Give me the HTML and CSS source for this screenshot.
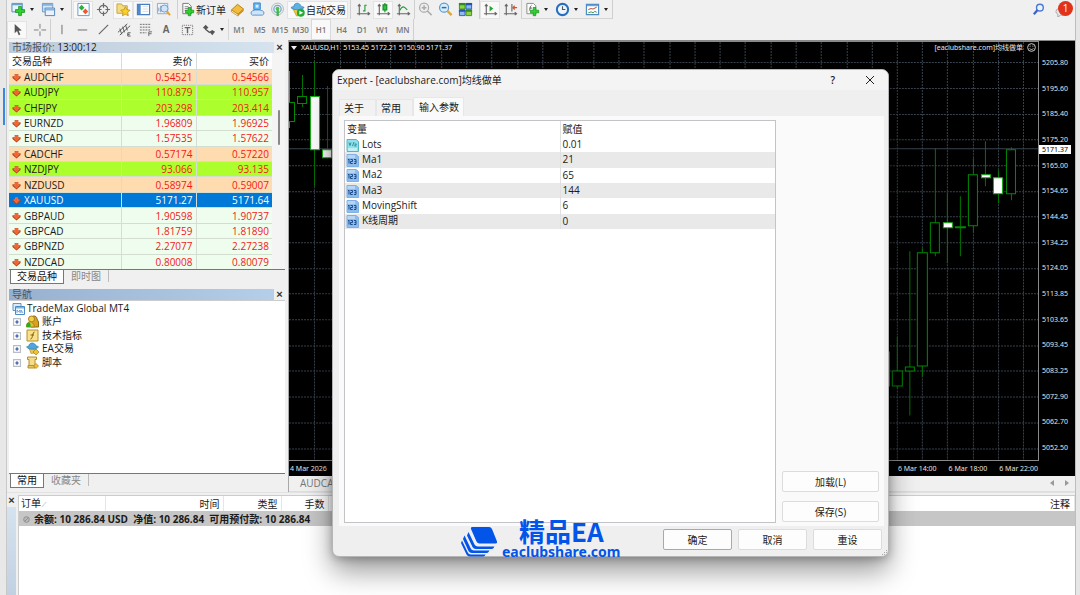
FILE: index.html
```html
<!DOCTYPE html>
<html lang="zh-CN">
<head>
<meta charset="utf-8">
<title>TradeMax Global MT4</title>
<link rel="stylesheet" href="styles.css">
</head>
<body>
<svg class="defs" aria-hidden="true">
  <symbol id="tick" viewBox="0 0 10 10"><path d="M3 1h4v2.500h2.500v2L5 9.500.5 5.500v-2H3z" fill="#b8401c"/><path d="M3.800 1.800h2.400v2.500h2L5 8 1.800 4.300h2z" fill="#f4622c" stroke="#f9a27a" stroke-width=".4"/></symbol>
  <symbol id="plus" viewBox="0 0 16 16"><path d="M5.500 1h4v4.500h4.500v4h-4.500v4.500h-4v-4.500H1v-4h4.500z" fill="#2fd32f" stroke="#0a8a12"/></symbol>
  <symbol id="num" viewBox="0 0 13 13"><path d="M1 .5h9l2.500 2v10h-11.500z" fill="#8ebcec" stroke="#7fb0e4"/><path d="M1.500 1h7.500v3H1.500z" fill="#b7d6f6"/><path d="M2 6l1-1v4.500M4.500 5.500h2v2h-2v2h2.200M8 5.500h2v4h-2M8.500 7.500h1.500" fill="none" stroke="#1d4c8c"/></symbol>
  <symbol id="box" viewBox="0 0 7 7"><path d="M.5.5h6v6h-6z" fill="#fff" stroke="#b8bec6"/><path d="M2 3.500h3M3.500 2v3" stroke="#2b4a9c"/></symbol>
</svg>
<div class="desktop">
<div class="edge edge-left"><span class="mark"></span></div>
<main class="app">
  <header class="toolbars">
    <div class="toolbar">
      <div class="group first">
        <button class="tool drop" aria-label="新图表"><svg viewBox="0 0 16 16"><path d="M1 1.500h11v9H1z" fill="#e8f2fb" stroke="#4c86b8"/><path d="M1 1.500h11v2H1z" fill="#6ea3d0"/><use href="#plus" x="4" y="4" width="12" height="12"/></svg></button>
        <button class="tool drop" aria-label="配置文件"><svg viewBox="0 0 16 16"><path d="M1.500 1.500h11v9h-11z" fill="#d6e6f6" stroke="#6b96c4"/><path d="M4.500 6.500h10v8h-10z" fill="#eaf3fc" stroke="#4f83ba"/><path d="M2 2h10v2H2zM5 7h9v2H5zM3 6h1v3H3z" fill="#87b2de"/></svg></button>
      </div>
      <div class="group">
        <button class="tool on" aria-label="市场报价"><svg viewBox="0 0 16 16"><path d="M2 1.500h12v13H2z" fill="#fff" stroke="#5a9bd6"/><path d="M6 3l3 3-3 3-3-3z" fill="#2fae3e"/><path d="M10 7l3 3-3 3-3-3z" fill="#ea5a32"/></svg></button>
        <button class="tool" aria-label="数据窗口"><svg viewBox="0 0 16 16" fill="none" stroke="#6a6a6a" stroke-width="1.300"><circle cx="8" cy="8" r="4.500"/><path d="M8 1v5M8 10v5M1 8h5M10 8h5"/></svg></button>
        <button class="tool on" aria-label="导航"><svg viewBox="0 0 16 16"><path d="M1 2h5l1 2h5v8H1z" fill="#f4dc83" stroke="#c4a23c"/><path d="M10 5l1.600 3.200 3.400.5-2.500 2.500.6 3.500-3.100-1.700-3.100 1.700.6-3.500L5 8.700l3.400-.5z" fill="#f9d02c" stroke="#b98a10" stroke-width=".8"/></svg></button>
        <button class="tool on" aria-label="终端"><svg viewBox="0 0 16 16"><path d="M1.500 2.500h13v11h-13z" fill="#fff" stroke="#4a7fbe" stroke-width="1.200"/><path d="M2 3h3v10H2z" fill="#4f88cc"/><path d="M7 5h6M7 7.500h6M7 10h6" stroke="#d5dde8"/></svg></button>
        <button class="tool" aria-label="策略测试"><svg viewBox="0 0 16 16"><path d="M1.500 1.500h11v11h-11z" fill="#eef3f8" stroke="#92a9c2"/><path d="M3 10V6M5 11V4" stroke="#7f99b8"/><circle cx="9" cy="7" r="3.800" fill="#cfe6fa" stroke="#6a9ac8"/><path d="M11.500 10l3.500 4" stroke="#e0a33a" stroke-width="2.200"/></svg></button>
      </div>
      <div class="group">
        <button class="tool wide order"><svg viewBox="0 0 16 16"><path d="M3 1.500h6l3 3v8H3z" fill="#fafafa" stroke="#777"/><path d="M5 5h4M5 7h5M5 9h3" stroke="#888"/><use href="#plus" x="5" y="5" width="11" height="11"/></svg>新订单</button>
        <button class="tool" aria-label="MetaEditor"><svg viewBox="0 0 16 16"><path d="M1.500 8.500L8 2.500l6.500 5L8.500 13z" fill="#f2bd3c" stroke="#b57d12"/><path d="M1.500 8.500v2l7 4.500v-2z" fill="#fff0c0" stroke="#b57d12" stroke-width=".7"/><path d="M14.500 7.500v2l-6 5.500v-2z" fill="#c88a1c"/></svg></button>
        <button class="tool" aria-label="社区"><svg viewBox="0 0 16 16"><path d="M4 1h7v7H4z" fill="#67b5f3" stroke="#3a86cc"/><path d="M6 3h3v3H6z" fill="#d8efff"/><path d="M2.500 14a2.500 2.500 0 0 1 0-4.500l3-1h5l3 1a2.500 2.500 0 0 1 0 4.500z" fill="#cfe4f8" stroke="#5b94cc"/></svg></button>
        <button class="tool" aria-label="信号"><svg viewBox="0 0 16 16" fill="none"><circle cx="8" cy="7.500" r="6.300" stroke="#a9b8c4"/><circle cx="8" cy="7.500" r="3.900" stroke="#6fa9c9" stroke-width="1.300"/><path d="M7 7h2.500v8H7z" fill="#44b944"/><circle cx="8" cy="7" r="2" fill="#51c251"/></svg></button>
        <button class="tool wide on auto"><svg viewBox="0 0 16 16"><path d="M3 7l9 .5-1 6-4 1.500z" fill="#f6c944" stroke="#b58c18" stroke-width=".7"/><path d="M1 6c1-1 2-1 3-1 0-5 7-5 8 0 1 0 3 0 3 1-3 3-11 3-14 0z" fill="#5db1e4" stroke="#3079ae" stroke-width=".7"/><circle cx="11.500" cy="11.500" r="4.200" fill="#20b030"/><path d="M10 9.300l4 2.200-4 2.200z" fill="#fff"/></svg>自动交易</button>
      </div>
      <div class="group charts">
        <button class="tool" aria-label="柱状图"><svg viewBox="0 0 16 16" fill="none" stroke="#666" stroke-width="1.200"><path d="M3.500 3v11M1 12.500h13M2 4.500l1.500-2L5 4.500M12.500 11l2 1.500-2 1.500"/><path d="M9.500 3v7M9.500 3.500h2M7.500 9.500h2" stroke="#2a9a3a"/></svg></button>
        <button class="tool on" aria-label="蜡烛图"><svg viewBox="0 0 16 16" fill="none" stroke="#666" stroke-width="1.200"><path d="M3.500 3v11M1 12.500h13M2 4.500l1.500-2L5 4.500M12.500 11l2 1.500-2 1.500"/><path d="M9.500 1v10" stroke="#148b24"/><path d="M7.500 3h4v5.500h-4z" fill="#2cc53c" stroke="#148b24"/></svg></button>
        <button class="tool" aria-label="折线图"><svg viewBox="0 0 16 16" fill="none" stroke="#666" stroke-width="1.200"><path d="M3.500 3v11M1 12.500h13M2 4.500l1.500-2L5 4.500M12.500 11l2 1.500-2 1.500"/><path d="M4 9c3-6 5-4 8-.5" stroke="#2a9a3a"/></svg></button>
      </div>
      <div class="group">
        <button class="tool" aria-label="放大"><svg viewBox="0 0 16 16"><circle cx="6.500" cy="6" r="4.800" fill="#eee" stroke="#aaa" stroke-width="1.300"/><path d="M4 6h5M6.500 3.500v5M10 9.500l4.500 4.500" stroke="#aaa" stroke-width="1.600"/></svg></button>
        <button class="tool" aria-label="缩小"><svg viewBox="0 0 16 16"><circle cx="6.500" cy="6" r="4.800" fill="#d8edfc" stroke="#5b9bd0" stroke-width="1.300"/><path d="M4 6h5" stroke="#2c6ea8" stroke-width="1.600"/><path d="M10 9.500l4.500 4.500" stroke="#dba63a" stroke-width="2.400"/></svg></button>
        <button class="tool" aria-label="平铺窗口"><svg viewBox="0 0 16 16"><path d="M1.500 1.500h6v6h-6zM8.500 8.500h6v6h-6z" fill="#8fd04a" stroke="#3c8f20"/><path d="M8.500 1.500h6v6h-6zM1.500 8.500h6v6h-6z" fill="#8db8f0" stroke="#2c5fb4"/><path d="M1 1h7v2.500H1zM8 8h7v2.500H8z" fill="#2e8a1c"/><path d="M8.500 1H15v2.500H8.500zM1 8h6.500v2.500H1z" fill="#2355b0"/></svg></button>
      </div>
      <div class="group last">
        <button class="tool on" aria-label="自动滚动"><svg viewBox="0 0 16 16" fill="none" stroke="#666" stroke-width="1.200"><path d="M3.500 3v11M1 12.500h13M2 4.500l1.500-2L5 4.500M12.500 11l2 1.500-2 1.500"/><path d="M7 4l4 3-4 3z" fill="#25a535" stroke="none"/></svg></button>
        <button class="tool" aria-label="图表平移"><svg viewBox="0 0 16 16" fill="none" stroke="#666" stroke-width="1.200"><path d="M3.500 3v11M1 12.500h13M2 4.500l1.500-2L5 4.500M12.500 11l2 1.500-2 1.500M9.500 2v8"/><path d="M15 6h-4M12.500 4l-2 2 2 2" stroke="#d8512c"/></svg></button>
      </div>
      <div class="group end">
        <button class="tool drop" aria-label="指标"><svg viewBox="0 0 16 16"><path d="M2 1.500h7l2.500 2.500v8.500H2z" fill="#fff" stroke="#888"/><path d="M7 3.500c-2 0-1 6-3 6M4.500 6.500h3" stroke="#666" fill="none"/><use href="#plus" x="5" y="5" width="11" height="11"/></svg></button>
        <button class="tool drop" aria-label="时间周期"><svg viewBox="0 0 16 16"><circle cx="8" cy="8" r="6" fill="#edf6ff" stroke="#2a6fbd" stroke-width="2.200"/><path d="M8 4.500V8h3" fill="none" stroke="#555" stroke-width="1.200"/></svg></button>
        <button class="tool drop" aria-label="模板"><svg viewBox="0 0 16 16"><path d="M1.500 2.500h13v11h-13z" fill="#fff" stroke="#4b88c4" stroke-width="1.200"/><path d="M2 3h12v1.500H2z" fill="#6ba4dc"/><path d="M3.500 8l3-1 2 .5 4-2" stroke="#b3402c" fill="none"/><path d="M3.500 11.500l3-1 2 1 2-1.500 2 1" stroke="#35963a" fill="none"/></svg></button>
      </div>
      <div class="status">
        <button class="tool" aria-label="搜索"><svg viewBox="0 0 16 16"><circle cx="9.500" cy="6" r="3.600" fill="#eaf2ff" stroke="#4a79d4" stroke-width="1.500"/><path d="M7 8.500L3 13" stroke="#3c62c4" stroke-width="2.400"/></svg></button>
        <button class="tool chat" aria-label="通知"><svg viewBox="0 0 16 16"><path d="M1 10a4 3 0 0 1 4-3h4a4 3 0 0 1 0 7H6l-3 2v-3a4 3 0 0 1-2-3z" fill="#e6e6e6" stroke="#aaa"/></svg><span class="badge">1</span></button>
      </div>
    </div>
    <div class="toolbar second">
      <div class="group draw cursors">
        <button class="tool on" aria-label="光标"><svg viewBox="0 0 16 16"><path d="M5 2v10l2.500-2.300L9.300 14l1.700-.8-1.800-4 3.300-.2z" fill="#555"/></svg></button>
        <button class="tool" aria-label="十字线"><svg viewBox="0 0 16 16" stroke="#777"><path d="M8.500 2v5M8.500 10v5M2 8.500h5M10 8.500h5"/></svg></button>
      </div>
      <div class="group draw">
        <button class="tool" aria-label="垂直线"><svg viewBox="0 0 16 16"><path d="M8.500 3v10" stroke="#666"/></svg></button>
        <button class="tool" aria-label="水平线"><svg viewBox="0 0 16 16"><path d="M3 8.500h10" stroke="#666"/></svg></button>
        <button class="tool" aria-label="趋势线"><svg viewBox="0 0 16 16"><path d="M3 13L13 3" stroke="#666" stroke-width="1.200"/></svg></button>
        <button class="tool" aria-label="等距通道"><svg viewBox="0 0 16 16" fill="none" stroke="#555"><path d="M1 11L11 2M3 14l11-10M3 7l2 6M6 5l2 6M9 3l2 6M14.500 11.500h-3v3.500h3M11.500 13.200h2"/></svg></button>
        <button class="tool" aria-label="斐波那契"><svg viewBox="0 0 16 16" fill="none" stroke="#666"><path d="M2 2.500h12M2 5.500h12M2 8.500h12M2 11.500h7" stroke-dasharray="2 1"/><path d="M11.500 15v-4.500H15M11.500 12.500h3"/></svg></button>
        <button class="tool letter">A</button>
        <button class="tool" aria-label="文本标签"><svg viewBox="0 0 16 16" fill="none" stroke="#666"><path d="M2.500 3.500h11v10h-11z" stroke-dasharray="1 1"/><path d="M5 6h6M8 6v6" stroke-width="1.500"/></svg></button>
        <button class="tool drop" aria-label="箭头"><svg viewBox="0 0 16 16" fill="#555"><path d="M2 6l3-3 3 3-3 2zM9 10.500l3-2 3 2-3 3.500zM5 7l5 4-1 1-5-4z"/></svg></button>
      </div>
      <div class="frames">
        <button>M1</button><button>M5</button><button>M15</button><button>M30</button><button class="on">H1</button><button>H4</button><button>D1</button><button>W1</button><button>MN</button>
      </div>
    </div>
  </header>

  <div class="workspace">
    <aside class="side">
      <section class="dock market">
        <div class="dock-title"><h2>市场报价: <em>13:00:12</em></h2><button class="x" aria-label="关闭市场报价">×</button></div>
        <div class="market-body">
          <table class="quotes">
            <thead><tr><th>交易品种</th><th>卖价</th><th>买价</th></tr></thead>
            <tbody>
              <tr class="peach"><td><svg><use href="#tick"/></svg>AUDCHF</td><td>0.54521</td><td>0.54566</td></tr>
              <tr class="lime"><td><svg><use href="#tick"/></svg>AUDJPY</td><td>110.879</td><td>110.957</td></tr>
              <tr class="lime"><td><svg><use href="#tick"/></svg>CHFJPY</td><td>203.298</td><td>203.414</td></tr>
              <tr><td><svg><use href="#tick"/></svg>EURNZD</td><td>1.96809</td><td>1.96925</td></tr>
              <tr><td><svg><use href="#tick"/></svg>EURCAD</td><td>1.57535</td><td>1.57622</td></tr>
              <tr class="peach"><td><svg><use href="#tick"/></svg>CADCHF</td><td>0.57174</td><td>0.57220</td></tr>
              <tr class="lime"><td><svg><use href="#tick"/></svg>NZDJPY</td><td>93.066</td><td>93.135</td></tr>
              <tr class="peach"><td><svg><use href="#tick"/></svg>NZDUSD</td><td>0.58974</td><td>0.59007</td></tr>
              <tr class="selected"><td><svg><use href="#tick"/></svg>XAUUSD</td><td>5171.27</td><td>5171.64</td></tr>
              <tr><td><svg><use href="#tick"/></svg>GBPAUD</td><td>1.90598</td><td>1.90737</td></tr>
              <tr><td><svg><use href="#tick"/></svg>GBPCAD</td><td>1.81759</td><td>1.81890</td></tr>
              <tr><td><svg><use href="#tick"/></svg>GBPNZD</td><td>2.27077</td><td>2.27238</td></tr>
              <tr><td><svg><use href="#tick"/></svg>NZDCAD</td><td>0.80008</td><td>0.80079</td></tr>
            </tbody>
          </table>
          <div class="scroll"><span></span></div>
        </div>
        <div class="tabs"><button class="active">交易品种</button><button>即时图</button></div>
      </section>
      <section class="dock navigator">
        <div class="dock-title strong"><h2>导航</h2><button class="x" aria-label="关闭导航">×</button></div>
        <div class="tree">
          <div class="root"><svg viewBox="0 0 13 13"><path d="M1 1.500h8v7H1z" fill="#dcebf8" stroke="#5d97cc"/><path d="M3.500 4.500h9v8h-9z" fill="#f4faff" stroke="#4d8ac4"/><path d="M4 5h8v1.500H4z" fill="#7fb1e0"/><path d="M5 11V8l1.500 2L8 8v3M9 11V8l2 3" fill="none" stroke="#4d8ac4" stroke-width=".7"/></svg>TradeMax Global MT4</div>
          <ul>
            <li><button aria-label="展开账户"><svg><use href="#box"/></svg></button><svg class="ic" viewBox="0 0 13 13"><path d="M5 4c0-4 6-4 6 0l1.500 3v5H5z" fill="#d9a21c" stroke="#8c6a12"/><circle cx="5.500" cy="4" r="3" fill="#f3d04c" stroke="#a9811c"/><path d="M.5 12c0-7 7-7 8 0z" fill="#e8bc30" stroke="#a9811c"/><path d="M.5 12V9.500a2 2 0 0 1 4 0V12z" fill="#22b022"/></svg>账户</li>
            <li><button aria-label="展开技术指标"><svg><use href="#box"/></svg></button><svg class="ic" viewBox="0 0 13 13"><path d="M1 1h11v11H1z" fill="#f9e08a" stroke="#b3902a"/><path d="M8.500 3c-2-.5-1.500 7-4 7M4.500 6h3.500" fill="none" stroke="#7d5f10"/></svg>技术指标</li>
            <li><button aria-label="展开EA交易"><svg><use href="#box"/></svg></button><svg class="ic" viewBox="0 0 13 13"><path d="M3 6l7 1-1 4-4 .5z" fill="#e9c458" stroke="#a98420" stroke-width=".6"/><path d="M.5 5C2 4 2.500 4 3 4c0-4 6-4 7 0 1 0 2 .3 2.500 1-3 3-9 3-12 0z" fill="#4ea6dc" stroke="#2b78aa" stroke-width=".7"/><path d="M10 7l3 3-3 3-3-3z" fill="#f2c22e" stroke="#a67c14" stroke-width=".7"/></svg>EA交易</li>
            <li><button aria-label="展开脚本"><svg><use href="#box"/></svg></button><svg class="ic" viewBox="0 0 13 13"><path d="M1.500 1h9v2.500H9V10H3V3.500H1.500z" fill="#f4dc8c" stroke="#b3902a"/><path d="M2 9.500h7V12H2z" fill="#e8c660" stroke="#b3902a"/><path d="M10 7.500l2.500 2.500-2.500 2.500L7.500 10z" fill="#f2c22e" stroke="#a67c14" stroke-width=".7"/></svg>脚本</li>
          </ul>
        </div>
        <div class="tabs"><button class="active">常用</button><button>收藏夹</button></div>
      </section>
    </aside>

    <section class="charts-area">
      <div class="chart">
        <div class="plot">
          <svg viewBox="290 42 748 419" preserveAspectRatio="xMaxYMin slice" role="img" aria-label="XAUUSD H1">
            <g class="grid">
              <path d="M290 62.500h749M290 88.500h749M290 114.500h749M290 139.500h749M290 165.500h749M290 191.500h749M290 216.500h749M290 242.500h749M290 268.500h749M290 293.500h749M290 319.500h749M290 345.500h749M290 370.500h749M290 396.500h749M290 422.500h749M290 448.500h749"/>
              <path d="M315.500 42v419M341.500 42v419M366.500 42v419M391.500 42v419M416.500 42v419M442.500 42v419M467.500 42v419M492.500 42v419M518.500 42v419M543.500 42v419M568.500 42v419M594.500 42v419M619.500 42v419M644.500 42v419M670.500 42v419M695.500 42v419M720.500 42v419M745.500 42v419M771.500 42v419M796.500 42v419M821.500 42v419M847.500 42v419M872.500 42v419M897.500 42v419M922.500 42v419M947.500 42v419M973.500 42v419M998.500 42v419M1023.500 42v419"/>
            </g>
            <path class="price" d="M290 148.500h749"/>
            <g class="wick"><path d="M303.500 75v32M315.500 62v124M328.500 86v72M897.500 336v52M910 251v164M922.500 248v128M935.500 148v108M947.500 193v70M960.500 196v60M973.500 158v74M985.500 141v45M998.500 170v33M1011.500 147v53"/></g>
            <path d="M290.500 71v57M889.500 351v35" stroke="#22b422"/>
            <g class="hollow"><path d="M288.500 102.500h7v19h-7z"/><path d="M298.500 96.500h9v7h-9zM892.500 370.500h10v15h-10zM905.500 366.500h9v4h-9zM917.500 252.500h10v113h-10zM930.500 222.500h9v30h-9zM955.500 226.500h10v1h-10zM968.500 174.500h9v51h-9zM1006.500 149.500h9v44h-9z"/></g>
            <g class="solid"><path d="M311.500 96.500h9v53h-9zM323.500 149.500h9v8h-9zM943.500 222.500h9v5h-9zM981.500 174.500h9v3h-9zM993.500 177.500h9v16h-9z"/></g>
          </svg>
          <div class="chart-head"><span class="caret"></span>XAUUSD,H1&nbsp; 5153.45 5172.21 5150.90 5171.37</div>
          <div class="expert">[eaclubshare.com]均线做单 <svg viewBox="0 0 10 10" fill="none" stroke="#ddd"><circle cx="5" cy="5" r="4.300"/><path d="M3 6c1 1.800 3 1.800 4 0M3.500 3v1M6.500 3v1"/></svg></div>
        </div>
        <div class="axis"><span>5205.80</span><span>5195.60</span><span>5185.40</span><span>5175.20</span><span>5165.00</span><span>5154.65</span><span>5144.45</span><span>5134.25</span><span>5124.05</span><span>5113.85</span><span>5103.65</span><span>5093.45</span><span>5083.25</span><span>5072.90</span><span>5062.70</span><span>5052.50</span><b class="current">5171.37</b></div>
        <div class="times"><span class="start">4 Mar 2026</span><span>6 Mar 14:00</span><span>6 Mar 18:00</span><span>6 Mar 22:00</span></div>
      </div>
      <div class="chart-tabs"><button>AUDCAD,H1</button><span class="arrows"><button aria-label="向左" class="prev"></button><button aria-label="向右" class="next"></button></span></div>
    </section>
  </div>

  <section class="terminal">
    <div class="rail"><button class="x" aria-label="关闭终端">×</button><span></span></div>
    <div class="orders">
      <table>
        <colgroup><col class="c1"><col class="c2"><col class="c3"><col class="c4"><col></colgroup>
        <thead><tr><th>订单 <i>⁄</i></th><th>时间</th><th>类型</th><th>手数</th><th>注释</th></tr></thead>
        <tbody><tr><td colspan="5"><svg viewBox="0 0 7 7"><circle cx="3.500" cy="3.500" r="2.800" fill="#bbb" stroke="#8d8d8d"/><path d="M2 5l3-3" stroke="#8d8d8d"/></svg>余额: 10 286.84 USD&nbsp; 净值: 10 286.84&nbsp; 可用预付款: 10 286.84</td></tr></tbody>
      </table>
    </div>
  </section>
</main>
<div class="edge edge-right"></div>

<section class="dialog" role="dialog" aria-labelledby="dlg">
  <div class="dialog-title"><h1 id="dlg">Expert - [eaclubshare.com]均线做单</h1><button class="help">?</button><button aria-label="关闭"><svg viewBox="0 0 10 10"><path d="M1 1l8 8M9 1L1 9" stroke="#222" fill="none"/></svg></button></div>
  <div class="dialog-tabs"><button>关于</button><button>常用</button><button class="active">输入参数</button></div>
  <div class="pane">
    <div class="params">
      <table>
        <thead><tr><th>变量</th><th>赋值</th></tr></thead>
        <tbody>
          <tr><td><svg viewBox="0 0 13 13"><path d="M1 .5h9l2.500 2v10h-11.500z" fill="#8fe0ea" stroke="#54b4c4"/><path d="M3 3.500l1 3 1-3M8 3L6.500 7M8.500 5h2L8.500 7h2" fill="none" stroke="#187888" stroke-width=".8"/><path d="M2 9h9v3H2z" fill="#bff0f4"/></svg>Lots</td><td>0.01</td></tr>
          <tr><td><svg><use href="#num"/></svg>Ma1</td><td>21</td></tr>
          <tr><td><svg><use href="#num"/></svg>Ma2</td><td>65</td></tr>
          <tr><td><svg><use href="#num"/></svg>Ma3</td><td>144</td></tr>
          <tr><td><svg><use href="#num"/></svg>MovingShift</td><td>6</td></tr>
          <tr><td><svg><use href="#num"/></svg>K线周期</td><td>0</td></tr>
        </tbody>
      </table>
    </div>
    <div class="pane-actions"><button class="btn">加载(L)</button><button class="btn">保存(S)</button></div>
  </div>
  <div class="dialog-foot"><button class="btn primary">确定</button><button class="btn">取消</button><button class="btn">重设</button></div>
  <svg class="grip" viewBox="0 0 5 5"><path d="M4 0h1v1H4zM2 2h1v1H2zM4 2h1v1H4zM0 4h1v1H0zM2 4h1v1H2z" fill="#aaa"/></svg>
</section>

<div class="brand">
  <svg viewBox="0 0 36 31" fill="#0354e8"><path d="M11.500 1h16.500q2 0 3 2l5 12.500q.5 2-1.500 2H18.500q-2 0-3-2L10 3q-.5-2 1.500-2z"/><path d="M7.500 6l6 12.500q1 2 3.500 2h16.500l-1 1.500q-.5 1-2 1H15q-2.500 0-3.500-2L6 9.500z"/><path d="M3.500 9.500l6 12.500q1 2.500 3.500 2.500h15.500l-1 1.500q-.5 1-2 1H11q-2.500 0-3.500-2L2 13z"/><path d="M1 14.500l5.500 11.500q1 2.500 3.500 2.500h14.500l-.5 1q-.5 1-2 1H9q-2.500 0-3.500-2L0 17z"/></svg>
  <div><strong>精品EA</strong><span>eaclubshare.com</span></div>
</div>
</div>
</body>
</html>
```
FILE: styles.css
```css
* { box-sizing: border-box; }
html, body { height: 100%; }
body {
  margin: 0;
  overflow: hidden;
  font: 10px/14px "Open Sans", "Noto Sans CJK SC", sans-serif;
  color: #1a1a1a;
  background: #e4e4e4;
}
button {
  font: inherit;
  color: inherit;
  border: 0;
  padding: 0;
  margin: 0;
  background: none;
}
h1, h2 { margin: 0; font-size: inherit; font-weight: 400; }
table { border-collapse: collapse; table-layout: fixed; width: 100%; }
th { font-weight: 400; }
svg { display: block; flex: none; }
.defs { position: absolute; width: 0; height: 0; }

.desktop { position: relative; display: flex; height: 100%; }
.edge { flex: none; background: #dedede; }
.edge-left { width: 7px; padding: 88px 1px 0 3px; border-right: 1px solid #c8c8c8; background: #e8e8e8; }
.edge-left .mark { display: block; height: 37px; width: 2px; background: #3a87e0; }
.edge-right { width: 5px; border-left: 1px solid #bdbdbd; background: #e6e6e6; }
.app { flex: 1; min-width: 0; display: flex; flex-direction: column; background: #f0f0f0; }

/* toolbars */
.toolbars { flex: none; height: 40px; }
.toolbar { display: flex; align-items: center; height: 19px; }
.toolbar.second { height: 21px; }
.group { display: flex; align-items: center; padding: 0 2px 0 1px; height: 100%; border-right: 1px solid #cfcfcf; }
.group.first { padding-right: 3px; }
.group:nth-child(2) { padding-right: 4px; }
.group.charts { padding: 0 1px 0 2px; }
.group.charts + .group { padding: 0 4px 0 0; }
.group.last { padding: 0 1px 0 0; }
.group.end { padding: 0; border-bottom: 1px solid #d4d4d4; }
.tool { display: flex; align-items: center; justify-content: center; width: 20px; height: 18px; }
.tool svg { width: 15px; height: 15px; }
.tool.on { background: #f9f9f9; box-shadow: inset 0 0 0 1px #e3e3e3; }
.tool.drop { width: 30px; justify-content: flex-start; padding-left: 3px; gap: 4px; }
.tool.drop::after { content: ""; border: 2px solid transparent; border-top: 3px solid #222; border-bottom: 0; }
.tool.wide { width: auto; padding: 0 1px; gap: 1px; }
.tool.wide.auto { padding: 0 2px 0 3px; }
.group.draw { border-right: 0; gap: 1px; padding: 0; }
.group.draw.cursors { gap: 2px; border-right: 1px solid #cfcfcf; padding-right: 1px; }
.tool.letter { font: 700 10px/14px "Liberation Sans", sans-serif; color: #666; }
.frames { display: grid; grid-template-columns: repeat(9, 1fr); width: 186px; height: 100%; border-right: 1px solid #cfcfcf; border-left: 1px solid #d8d8d8; }
.frames button { font-size: 8px; font-weight: 600; color: #777; }
.frames .on { background: #f9f9f9; box-shadow: inset 0 0 0 1px #d9d9d9; }
.status { display: flex; margin-left: auto; padding-right: 3px; gap: 4px; }
.chat { position: relative; }
.badge { position: absolute; right: -1px; top: 0; width: 15px; height: 15px; border-radius: 50%; background: #e0321c; color: #fff; font-size: 10px; line-height: 15px; text-align: center; }

/* workspace */
.workspace { flex: none; display: flex; min-height: 452px; }
.side { flex: none; width: 282px; padding: 1px 3px 4px 2px; border-right: 1px solid #a8a8a8; display: flex; flex-direction: column; gap: 4px; }
.dock-title { display: flex; align-items: center; height: 12px; }
.dock-title h2 { flex: 1; height: 11px; line-height: 11px; padding-left: 3px; background: linear-gradient(90deg, #bccbdb, #d6e3ef); color: #4a545e; }
.dock-title em { font-style: normal; color: #1a1a1a; }
.dock-title.strong h2 { background: linear-gradient(90deg, #96b1cf, #b5cee9); }
.x { width: 11px; font: 700 11px/10px "Liberation Sans", sans-serif; color: #333; }
.market-body { display: flex; background: #f4f4f4; }
.quotes { flex: none; width: 263px; height: 216px; background: #fff; }
.quotes th, .quotes td { padding: 0 3px; text-align: right; line-height: 14px; border-right: 1px solid #d7dcd4; }
.quotes th { height: 16px; padding-top: 1px; }
.quotes th:first-child, .quotes td:first-child { width: 112px; text-align: left; }
.quotes th:nth-child(2) { width: 75px; }
.quotes th:last-child, .quotes td:last-child { border-right: 0; }
.quotes tbody tr { background: #effdef; border-top: 1px solid #d3ddd0; }
.quotes td { color: #f31818; }
.quotes td:first-child { color: #1a1a1a; }
.quotes td svg { display: inline-block; vertical-align: -1px; width: 9px; height: 9px; margin-right: 3px; }
.quotes .peach { background: #fedcb0; }
.quotes .lime { background: #acff2c; }
.quotes .selected, .quotes tbody .selected { background: #0078d7; }
.quotes .selected td, .quotes .selected td:first-child { color: #fff; }
.scroll { flex: 1; padding: 57px 5px 0 0; }
.scroll span { display: block; margin-left: auto; width: 2px; height: 35px; border-radius: 1px; background: #888; }
.tabs { display: flex; height: 15px; border-top: 1px solid #777; padding-left: 1px; }
.tabs button { padding: 0 7px; line-height: 13px; color: #888; border-right: 1px solid #bbb; height: 12px; }
.tabs .active { padding: 0 6px; color: #111; background: #fff; border: 1px solid #777; border-top: 0; height: 14px; }
.navigator { flex: 1; display: flex; flex-direction: column; }
.tree { flex: 1; background: #fff; border-top: 1px solid #ccc; padding-left: 3px; }
.root { display: flex; align-items: center; gap: 2px; height: 14px; }
.root svg { width: 13px; height: 13px; }
.tree ul { list-style: none; margin: 0 0 0 1px; padding: 0; }
.tree li { display: flex; align-items: center; height: 13px; margin-bottom: 1px; line-height: 13px; gap: 2px; }
.tree li:nth-child(2n) { margin-bottom: 0; }
.tree li button svg { width: 8px; height: 8px; }
.tree .ic { width: 13px; height: 13px; margin: 0 1px 0 3px; }

/* chart */
.charts-area { flex: 1; min-width: 0; display: flex; flex-direction: column; }
.chart { flex: 1; display: grid; grid-template: 420px 14px / minmax(0, 1fr) 36px; background: #000; color: #e4e4e4; border-top: 1px solid #888; font: 7px/9px "Noto Sans", "Noto Sans CJK SC", sans-serif; }
.plot { position: relative; min-width: 0; overflow: hidden; border: solid #8a8a8a; border-width: 1px 1px 1px 0; }
.plot > svg { width: 100%; height: 100%; }
.grid path { stroke: #39434d; stroke-dasharray: 2 1; fill: none; }
.price { stroke: #3a444e; }
.wick { stroke: #007400; }
.hollow { fill: #000; stroke: #008a00; }
.solid { fill: #fff; stroke: #16b016; }
.chart-head { position: absolute; left: 2px; top: 1px; display: flex; align-items: center; gap: 4px; color: #f2f2f2; white-space: pre; }
.caret { border: 3px solid transparent; border-top: 4px solid #eee; border-bottom: 0; }
.expert { position: absolute; right: 2px; top: 1px; display: flex; align-items: center; gap: 4px; }
.expert svg { width: 9px; height: 9px; }
.axis { position: relative; display: flex; flex-direction: column; justify-content: space-between; padding: 17px 0 9px 3px; }
.current { position: absolute; left: 0; top: 104px; padding: 0 3px; background: #fff; color: #000; font-weight: 400; }
.times { grid-column: 1 / 3; display: flex; align-items: center; gap: 12px; padding: 0 37px 0 1px; white-space: nowrap; }
.start { margin-right: auto; }
.chart-tabs { display: flex; align-items: center; justify-content: space-between; height: 16px; padding: 0 6px 2px 11px; color: #777; border-bottom: 1px solid #ddd; }
.arrows { display: flex; gap: 11px; }
.arrows button { border: 3px solid transparent; }
.arrows .prev { border-right: 4px solid #999; border-left: 0; }
.arrows .next { border-left: 4px solid #999; border-right: 0; }

/* terminal */
.terminal { flex: 1; display: flex; border-top: 1px solid #e2e2e2; padding-top: 2px; }
.rail { flex: none; width: 11px; display: flex; flex-direction: column; gap: 3px; }
.rail .x { width: 9px; height: 9px; }
.rail span { flex: 1; width: 9px; background: linear-gradient(#d5e2ef, #c2d1e2); }
.orders { flex: 1; background: #fff; border: 1px solid #ccc; border-width: 1px 0 0 1px; }
.orders th { height: 15px; padding: 0 3px; line-height: 14px; text-align: right; border-right: 1px solid #e6e6e6; }
.orders th:first-child { text-align: left; padding-left: 2px; }
.orders th:last-child { padding-right: 4px; }
.orders i { color: #aaa; font-size: 8px; }
.orders td { height: 15px; line-height: 14px; padding: 0 4px; background: #c6c6c6; font-weight: 700; }
.orders td svg { display: inline-block; width: 7px; height: 7px; margin-right: 4px; }
.c1 { width: 86px; }
.c2 { width: 118px; }
.c3 { width: 58px; }
.c4 { width: 47px; }

/* dialog */
.dialog { position: absolute; left: 332px; top: 69px; width: 557px; display: flex; flex-direction: column; border: 1px solid #b5b5b5; border-radius: 7px; background: #efefef; box-shadow: 0 14px 28px rgba(0, 0, 0, .4), 0 2px 8px rgba(0, 0, 0, .25); overflow: hidden; }
.dialog-title { display: flex; align-items: center; height: 20px; padding: 0 13px 0 4px; gap: 30px; background: #f4f4f4; }
.dialog-title h1 { flex: 1; }
.dialog-title svg { width: 10px; height: 10px; }
.help { font-weight: 600; }
.dialog-tabs { display: flex; align-items: flex-end; height: 26px; padding: 0 6px; }
.dialog-tabs button { height: 17px; width: 37px; border: 1px solid #e7e7e7; border-bottom: 0; background: #f2f2f2; text-align: left; padding-left: 4px; white-space: nowrap; }
.dialog-tabs .active { width: 51px; height: 19px; padding-left: 5px; background: #fafafa; }
.pane { display: flex; gap: 6px; margin: 0 4px 0 6px; padding: 4px 5px 3px; background: #fafafa; }
.params { flex: 1; min-height: 403px; border: 1px solid #c3c3c8; background: #fff; }
.params table { height: 108px; }
.params th, .params td { text-align: left; padding: 0 2px; line-height: 13px; border-right: 1px solid #e0e0e0; }
.params th { height: 16px; padding-top: 1px; }
.params th:last-child, .params td:last-child { border-right: 0; }
.params tbody tr:nth-child(2n) { background: #e9e9e9; }
.params td { height: 15px; }
.params td svg { display: inline-block; vertical-align: middle; width: 13px; height: 13px; margin: 0 3px 0 -1px; }
.pane-actions { flex: none; width: 97px; display: flex; flex-direction: column; justify-content: flex-end; gap: 9px; padding-bottom: 1px; }
.btn { height: 21px; background: #fdfdfd; border: 1px solid #dcdcdc; border-radius: 2px; }
.dialog-foot { display: flex; justify-content: flex-end; gap: 6px; padding: 3px 6px 6px; }
.dialog-foot .btn { width: 69px; }
.dialog-foot .primary { border-color: #7ab5e6; }
.grip { position: absolute; right: 1px; bottom: 1px; width: 5px; height: 5px; }

.brand { position: absolute; left: 461px; top: 516px; display: flex; align-items: center; gap: 5px; color: #0354e8; }
.brand svg { width: 36px; height: 31px; margin-top: 7px; }
.brand div { display: flex; flex-direction: column; align-items: center; }
.brand strong { font: 700 26px/29px "Noto Sans CJK SC", sans-serif; }
.brand span { font: 700 14px/14px "Noto Sans", sans-serif; }
```
